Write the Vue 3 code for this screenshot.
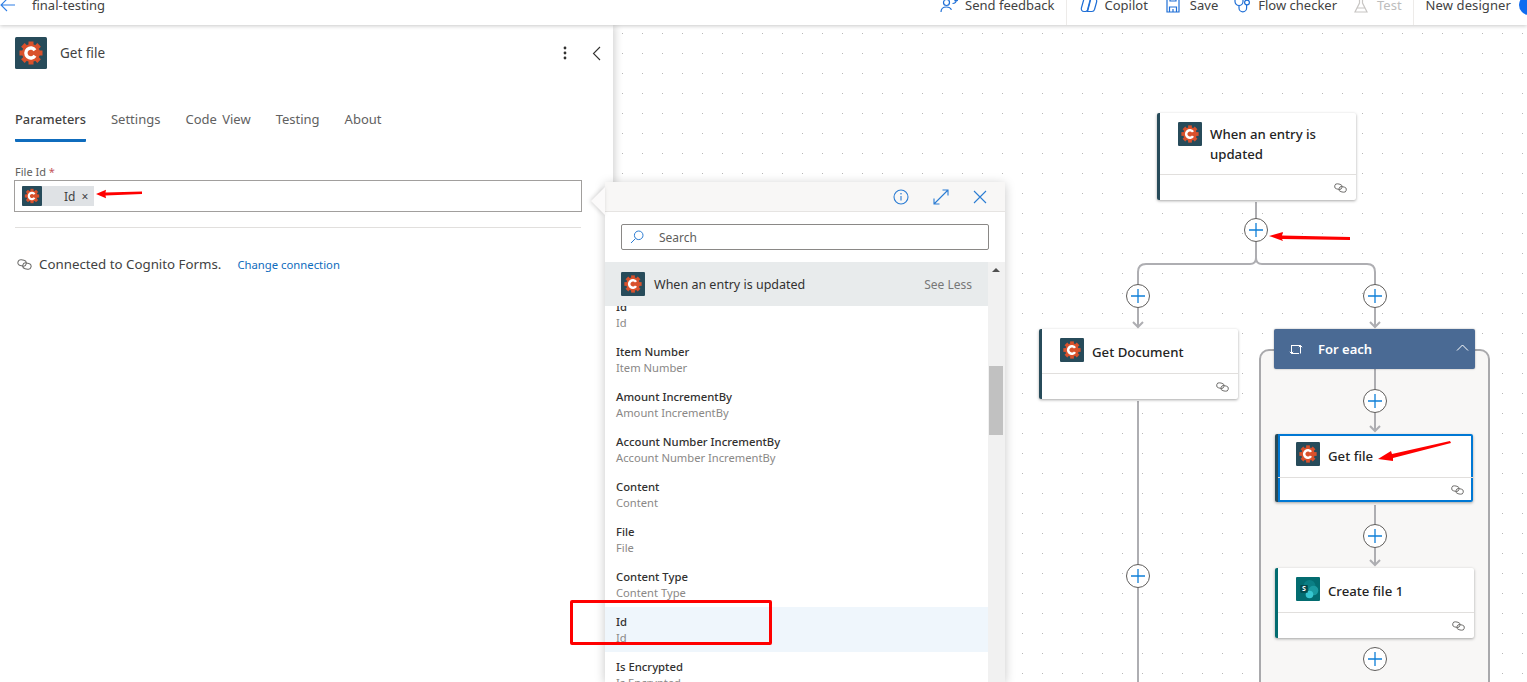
<script setup>
const tabs = ['Parameters', 'Settings', 'Code View', 'Testing', 'About']
const fields = ['Id', 'Item Number', 'Amount IncrementBy', 'Account Number IncrementBy', 'Content', 'File', 'Content Type', 'Id', 'Is Encrypted']
const ox = 613
const oy = 25
const nodes = [
  { title: 'When an entry is updated', x: 1157, y: 113, w: 199, h: 87, bar: '#274b5a', kind: 'cog' },
  { title: 'Get Document', x: 1039, y: 329, w: 199, h: 70, bar: '#274b5a', kind: 'cog', single: true },
  { title: 'Get file', x: 1275, y: 434, w: 198, h: 68, bar: '#274b5a', kind: 'cog', single: true, selected: true },
  { title: 'Create file 1', x: 1275, y: 568, w: 199, h: 70, bar: '#036c70', kind: 'sp', single: true }
]
const pluses = [[1256, 230], [1138, 296], [1375, 296], [1375, 401], [1375, 536], [1138, 576], [1375, 659]]
const pos = (x, y) => ({ left: x - ox + 'px', top: y - oy + 'px' })
const nodeStyle = n => ({ ...pos(n.x, n.y), width: n.w + 'px', height: n.h + 'px', borderLeftColor: n.bar })
</script>

<template>
  <div class="page">
    <svg class="defs" width="0" height="0">
      <symbol id="cog" viewBox="0 0 32 32">
        <rect width="32" height="32" rx="1.5" fill="#274b5a" />
        <g fill="#d9512c">
          <circle cx="16" cy="16" r="9" />
          <rect x="13.5" y="4.5" width="5" height="23" />
          <rect x="4.5" y="13.5" width="23" height="5" />
          <rect x="13.5" y="4.5" width="5" height="23" transform="rotate(45 16 16)" />
          <rect x="13.5" y="4.5" width="5" height="23" transform="rotate(-45 16 16)" />
        </g>
        <path d="M20 13.2a5 5 0 1 0 0 5.6" fill="none" stroke="#fff" stroke-width="3.4" />
      </symbol>
      <symbol id="link" viewBox="0 0 16 12">
        <g fill="none" stroke-width="1.100">
          <rect x="0.800" y="1" width="9.200" height="6.400" rx="3.200" stroke="#6b6a68" transform="rotate(12 5 4)" />
          <rect x="6" y="4.600" width="9.200" height="6.400" rx="3.200" stroke="#6b6a68" transform="rotate(12 11 8)" />
        </g>
      </symbol>
    </svg>

    <header class="topbar">
      <svg class="back" width="15" height="14" viewBox="0 0 15 14"><path d="M7 1 1 7l6 6M1 7h14" fill="none" stroke="#2f7fe6" stroke-width="1.1" /></svg>
      <span class="flow-name">final-testing</span>
      <nav class="actions">
        <span class="act">
          <svg width="18" height="16" viewBox="0 0 18 16"><g fill="none" stroke="#1f6fd6" stroke-width="1.2"><circle cx="6.500" cy="5.500" r="3" /><path d="M1 15c0-3.200 2.300-5 5.500-5 2.300 0 4 .9 5 2.700M12.500 6.500c2.500 0 4-1.200 4-4.500M14.500 4.200 16.500 2l1.500 2" /></g></svg>
          Send feedback
        </span>
        <i class="sep"></i>
        <span class="act copilot">
          <svg width="18" height="16" viewBox="0 0 18 16"><g fill="none" stroke="#1f6fd6" stroke-width="1.2"><path d="M6 1.500h4.500L7.500 13c-.3 1-1 1.500-2 1.500H4C2 14.500 1 13 1.400 11L3.500 3.500C3.900 2.200 4.800 1.500 6 1.500z" /><path d="M12 14.500H7.500L10.500 3c.3-1 1-1.500 2-1.500H14c2 0 3 1.500 2.600 3.500L14.500 12.500C14.100 13.800 13.200 14.500 12 14.500z" /></g></svg>
          Copilot
        </span>
        <span class="act save">
          <svg width="14" height="16" viewBox="0 0 14 16"><g fill="none" stroke="#1f6fd6" stroke-width="1.2"><path d="M1 1h10l2 2v12H1z" /><path d="M3.500 15v-5h7v5M4 1v3h6V1M7 12v3" /></g></svg>
          Save
        </span>
        <span class="act checker">
          <svg width="17" height="16" viewBox="0 0 17 16"><g fill="none" stroke="#1f6fd6" stroke-width="1.2"><path d="M1 0v4.500a4 4 0 0 0 8 0V0" /><path d="M5 8.500V11a3.800 3.800 0 0 0 7.600 0V8" /><circle cx="13" cy="5.500" r="2.400" /></g></svg>
          Flow checker
        </span>
        <span class="act test">
          <svg width="14" height="16" viewBox="0 0 14 16"><path d="M5 1h4M5.500 1v5L1 15h12L8.500 6V1M3.500 11h7" fill="none" stroke="#c8c6c4" stroke-width="1.200" /></svg>
          Test
        </span>
        <i class="sep last"></i>
        <span class="act designer">New designer</span>
        <i class="toggle"></i>
      </nav>
    </header>

    <div class="main">
      <aside class="panel">
        <div class="panel-head">
          <svg class="head-icon" width="32" height="32"><use href="#cog" /></svg>
          <span class="panel-title">Get file</span>
          <svg class="dots" width="4" height="14" viewBox="0 0 4 14"><g fill="#323130"><circle cx="2" cy="2" r="1.400" /><circle cx="2" cy="7" r="1.400" /><circle cx="2" cy="12" r="1.400" /></g></svg>
          <svg class="collapse" width="9" height="15" viewBox="0 0 9 15"><path d="M8 1 1.500 7.500 8 14" fill="none" stroke="#323130" stroke-width="1.100" /></svg>
        </div>
        <div class="tabs">
          <span v-for="(t, i) in tabs" :key="t" class="tab" :class="{ active: i === 0 }">{{ t }}</span>
        </div>
        <label class="field-label">File Id <em>*</em></label>
        <div class="input">
          <span class="token">
            <svg width="20" height="20"><use href="#cog" /></svg>
            <span class="token-text">Id</span>
            <span class="token-x">×</span>
          </span>
        </div>
        <hr class="rule" />
        <div class="conn">
          <svg width="15" height="11"><use href="#link" /></svg>
          <span class="conn-text">Connected to Cognito Forms.</span>
          <span class="conn-link">Change connection</span>
        </div>
      </aside>

      <section class="canvas">
        <div class="loop" :style="pos(1259, 349)"></div>
        <svg class="wires" width="914" height="657" viewBox="613 25 914 657">
          <g fill="none" stroke="#aeaeb2" stroke-width="2">
            <path d="M1256 202V258Q1256 264 1250 264H1146Q1138 264 1138 272V326" />
            <path d="M1256 258Q1256 264 1262 264H1367Q1375 264 1375 272V326" />
            <path d="M1133 322l5 5 5-5M1370 322l5 5 5-5" />
            <path d="M1138 401V682" />
            <path d="M1375 369V431M1370 426l5 5 5-5" />
            <path d="M1375 505V565M1370 560l5 5 5-5" />
          </g>
        </svg>

        <div class="foreach" :style="pos(1274, 329)">
          <svg width="14" height="13" viewBox="0 0 14 13"><path d="M3 2.500H11.500V10.500M2.500 2V10.500H10M.8 8.800 2.500 10.500 4.200 8.800M9.800 4.200 11.500 2.500 13.200 4.200" fill="none" stroke="#fff" stroke-width="1" /></svg>
          <span class="foreach-title">For each</span>
          <svg class="chev" width="13" height="7" viewBox="0 0 13 7"><path d="M1 6.500 6.500 1 12 6.500" fill="none" stroke="#fff" stroke-width="1" /></svg>
        </div>

        <article v-for="n in nodes" :key="n.title" class="node" :class="{ selected: n.selected }" :style="nodeStyle(n)">
          <div class="node-head">
            <svg v-if="n.kind === 'cog'" class="node-icon" width="24" height="24"><use href="#cog" /></svg>
            <svg v-else class="node-icon" width="24" height="24" viewBox="0 0 24 24">
              <rect width="24" height="24" rx="1" fill="#036c70" />
              <circle cx="13.500" cy="9" r="6" fill="#0a7f85" />
              <circle cx="17.500" cy="13.500" r="4.800" fill="#1a9ba1" />
              <circle cx="13.500" cy="17.500" r="3.800" fill="#37c6d0" />
              <rect x="4.300" y="8" width="7.500" height="7.700" rx=".8" fill="#04494c" />
              <text x="8" y="14.200" class="sp-letter">S</text>
            </svg>
            <span class="node-title" :class="{ single: n.single }">{{ n.title }}</span>
          </div>
          <div class="node-foot">
            <svg width="13" height="10"><use href="#link" /></svg>
          </div>
        </article>

        <button v-for="p in pluses" :key="p.join()" class="plus" :style="pos(p[0] - 12, p[1] - 12)">
          <svg width="14" height="14" viewBox="0 0 14 14"><path d="M7 0v14M0 7h14" stroke="#0f7fd8" stroke-width="1.300" /></svg>
        </button>

        <svg class="marks" width="914" height="657" viewBox="613 25 914 657">
          <g fill="#f00">
            <path d="M1269 236 1283 232 1282 235.500 1350 237V240L1282 239 1283 241z" />
            <path d="M1378 459 1391 451 1392 454 1450 441 1451 443 1393 458 1393 461z" />
          </g>
        </svg>
      </section>
    </div>

    <div class="picker">
      <i class="notch"></i>
      <div class="picker-head">
        <svg width="16" height="16" viewBox="0 0 16 16"><circle cx="8" cy="8" r="7" fill="none" stroke="#2b7cd3" stroke-width="1.100" /><path d="M8 7v4.500" stroke="#2b7cd3" stroke-width="1.100" /><circle cx="8" cy="4.800" r=".8" fill="#2b7cd3" /></svg>
        <svg width="16" height="16" viewBox="0 0 16 16"><path d="M1 15 15 1M9.500 1H15v5.500M1 9.500V15h5.500" fill="none" stroke="#2b7cd3" stroke-width="1.100" /></svg>
        <svg width="14" height="14" viewBox="0 0 14 14"><path d="M1 1l12 12M13 1 1 13" stroke="#2b7cd3" stroke-width="1.100" /></svg>
      </div>
      <div class="search">
        <svg width="14" height="14" viewBox="0 0 14 14"><circle cx="8.700" cy="5.300" r="4.300" fill="none" stroke="#2b7cd3" stroke-width="1" /><path d="M5.500 8.500 1 13" stroke="#2b7cd3" stroke-width="1" /></svg>
        <span>Search</span>
      </div>
      <div class="picker-body">
        <div class="list">
          <div class="group">
            <svg width="24" height="24"><use href="#cog" /></svg>
            <span class="group-title">When an entry is updated</span>
            <span class="see">See Less</span>
          </div>
          <div class="items">
            <div v-for="(f, i) in fields" :key="i" class="item" :class="{ hot: i === 7 }">
              <div class="item-name">{{ f }}</div>
              <div class="item-sub">{{ f }}</div>
            </div>
          </div>
        </div>
        <div class="scroll">
          <i class="up"></i>
          <i class="thumb"></i>
        </div>
      </div>
    </div>

    <div class="callout"></div>
    <svg class="chip-arrow" width="50" height="10" viewBox="0 0 50 10"><path d="M1 5 11 .8 10.500 3.500 47 2.500V5L10.500 6.500 11 9.200z" fill="#f00" /></svg>
  </div>
</template>

<style scoped>
.page {
  position: relative;
  width: 1527px;
  height: 682px;
  overflow: hidden;
  display: flex;
  flex-direction: column;
  background: #fff;
  color: #323130;
  font-family: "Noto Sans", "Open Sans", sans-serif;
  font-size: 13px;
}
.defs { position: absolute; }
.topbar {
  position: relative;
  z-index: 3;
  flex: 0 0 25px;
  height: 25px;
  display: flex;
  align-items: flex-start;
  background: #fff;
  box-shadow: 0 1px 4px rgba(0, 0, 0, .22);
  overflow: hidden;
  line-height: 11px;
}
.back { margin: -2px 0 0 0; flex: none; }
.flow-name { margin-left: 17px; color: #424242; }
.actions { margin-left: auto; display: flex; align-items: flex-start; height: 25px; }
.act { display: inline-flex; align-items: flex-start; gap: 7px; color: #424242; white-space: nowrap; }
.act svg { margin-top: -3px; flex: none; }
.act.copilot { margin-left: 13px; }
.act.save { margin-left: 18px; gap: 10px; }
.act.checker { margin-left: 16px; }
.act.test { margin-left: 17px; gap: 9px; color: #bdbdbd; }
.act.designer { margin-left: 12px; letter-spacing: .1px; }
.sep { width: 1px; height: 25px; background: #edebe9; margin-left: 11px; }
.toggle { width: 20px; height: 20px; margin: -5px -12px 0 8px; border-radius: 50%; background: #0f6cf0; }
.main { flex: 1; display: flex; min-height: 0; }
.panel {
  position: relative;
  z-index: 2;
  flex: 0 0 613px;
  padding: 12px 31px 0 15px;
  box-sizing: border-box;
  background: #fff;
  box-shadow: 2px 0 8px rgba(0, 0, 0, .18);
}
.panel-head { display: flex; align-items: center; height: 32px; }
.panel-title { margin-left: 13px; font-size: 13.500px; color: #424242; }
.dots { margin-left: auto; margin-right: 1px; }
.collapse { margin: 0 -19px 0 24px; }
.tabs { display: flex; gap: 25px; margin-top: 33px; height: 39px; }
.tab { height: 37px; line-height: 34px; font-size: 13px; color: #616161; box-sizing: content-box; word-spacing: 2px; }
.tab.active { color: #424242; font-size: 12.800px; font-weight: 500; border-bottom: 3px solid #0f6cbd; border-radius: 0 0 1px 1px; }
.field-label { display: block; margin-top: 24px; font-size: 11px; line-height: 14px; color: #605e5c; }
.field-label em { color: #c4555b; font-style: normal; }
.input {
  display: flex;
  align-items: center;
  box-sizing: border-box;
  width: 568px;
  height: 32px;
  margin: 1px 0 0 -1px;
  padding-left: 7px;
  border: 1px solid #a19f9d;
}
.token { display: flex; align-items: center; width: 72px; height: 20px; background: #dfe2e5; font-size: 12px; }
.token-text { margin-left: 22px; color: #424242; }
.token-x { margin-left: 6px; color: #424242; }
.rule { width: 566px; margin: 15px 0 0; border: 0; border-top: 1px solid #e1dfdd; }
.conn { display: flex; align-items: center; margin-top: 27px; padding-left: 2px; }
.conn-text { margin-left: 7px; font-size: 13.300px; color: #424242; }
.conn-link { margin-left: 16px; font-size: 11.300px; color: #0f6cbd; }
.canvas {
  position: relative;
  flex: 1;
  background-color: #fff;
  background-image: radial-gradient(circle at .5px .5px, #b8b8b8 .7px, transparent .8px);
  background-size: 20px 20px;
  background-position: 9px 8px;
}
.loop {
  position: absolute;
  width: 231px;
  height: 360px;
  box-sizing: border-box;
  border: 2px solid #a9a9ac;
  border-radius: 10px;
  background: #f8f7f6;
}
.wires, .marks { position: absolute; left: 0; top: 0; }
.marks { z-index: 2; pointer-events: none; }
.foreach {
  position: absolute;
  width: 201px;
  height: 40px;
  box-sizing: border-box;
  display: flex;
  align-items: center;
  padding-left: 15px;
  background: #4a6a94;
  border-radius: 2px;
  box-shadow: 0 0 2px rgba(0, 0, 0, .35);
  color: #fff;
}
.foreach-title { margin-left: 15px; font-weight: 600; font-size: 13px; }
.chev { margin-left: auto; margin-right: 6px; margin-top: -4px; }
.node {
  position: absolute;
  box-sizing: border-box;
  display: flex;
  flex-direction: column;
  background: #fff;
  border-left: 3px solid;
  border-radius: 2px;
  box-shadow: 0 1px 3px rgba(0, 0, 0, .35);
}
.node-head { flex: 1; display: flex; align-items: flex-start; padding: 9px 12px 0 18px; min-height: 0; }
.node-icon { flex: none; }
.node-title { margin-left: 8px; font-size: 13.200px; line-height: 20px; font-weight: 500; color: #242424; padding-top: 2px; }
.node-title.single { padding-top: 3.500px; }
.node-foot {
  flex: 0 0 26px;
  box-sizing: border-box;
  display: flex;
  align-items: center;
  justify-content: flex-end;
  padding-right: 9px;
  border-top: 1px solid #e1dfdd;
}
.node.selected { box-shadow: inset 0 0 0 2px #0078d4, 0 1px 3px rgba(0, 0, 0, .35); }
.node.selected .node-head { padding-top: 8px; }
.node.selected .node-foot { flex-basis: 25px; }
.sp-letter { font: 700 7px "Noto Sans", sans-serif; fill: #fff; text-anchor: middle; }
.plus {
  position: absolute;
  z-index: 1;
  width: 24px;
  height: 24px;
  padding: 0;
  display: flex;
  align-items: center;
  justify-content: center;
  background: #fff;
  border: 1px solid #605e5c;
  border-radius: 50%;
}
.picker {
  position: absolute;
  z-index: 4;
  left: 605px;
  top: 182px;
  width: 400px;
  height: 500px;
  display: flex;
  flex-direction: column;
  background: #fff;
  box-shadow: 0 2px 10px rgba(0, 0, 0, .22);
}
.notch {
  position: absolute;
  left: -14px;
  top: 5px;
  width: 0;
  height: 0;
  border: 14px solid transparent;
  border-left: 0;
  border-right-color: #fbfafa;
  filter: drop-shadow(-1px 0 2px rgba(0, 0, 0, .18));
}
.picker-head {
  flex: 0 0 30px;
  box-sizing: border-box;
  display: flex;
  align-items: center;
  justify-content: flex-end;
  gap: 24px;
  padding-right: 18px;
  background: #f8f7f6;
  border-bottom: 1px solid #e6e4e2;
}
.search {
  display: flex;
  align-items: center;
  gap: 15px;
  box-sizing: border-box;
  height: 26px;
  margin: 12px 16px 12px;
  padding-left: 8px;
  border: 1px solid #8a8886;
  border-radius: 2px;
  font-size: 12px;
  color: #605e5c;
}
.picker-body { flex: 1; display: flex; min-height: 0; }
.list { flex: 1; min-width: 0; display: flex; flex-direction: column; overflow: hidden; }
.group {
  position: relative;
  z-index: 1;
  flex: 0 0 44px;
  display: flex;
  align-items: center;
  padding: 0 16px;
  background: #e8ebec;
}
.group-title { margin-left: 9px; font-size: 12.500px; color: #323130; }
.see { margin-left: auto; font-size: 12px; color: #777; }
.items { margin-top: -14px; }
.item { height: 45px; box-sizing: border-box; padding: 7px 11px 0; line-height: 16px; font-size: 11.300px; }
.item.hot { background: #eff6fc; }
.item-name { color: #323130; font-weight: 500; }
.item-sub { font-size: 11.200px; color: #8a8886; }
.scroll { position: relative; flex: 0 0 17px; background: #f1f1f1; }
.up {
  position: absolute;
  left: 4px;
  top: 6px;
  width: 0;
  height: 0;
  border: 4px solid transparent;
  border-top: 0;
  border-bottom: 4px solid #505050;
}
.thumb { position: absolute; left: 1px; top: 104px; width: 14px; height: 69px; background: #c1c1c1; }
.callout {
  position: absolute;
  z-index: 5;
  left: 570px;
  top: 600px;
  width: 202px;
  height: 45px;
  box-sizing: border-box;
  border: 3px solid #f00;
  border-radius: 2px;
}
.chip-arrow { position: absolute; z-index: 5; left: 95px; top: 189px; }
</style>

<style>
html, body { margin: 0; overflow: hidden; }
</style>
